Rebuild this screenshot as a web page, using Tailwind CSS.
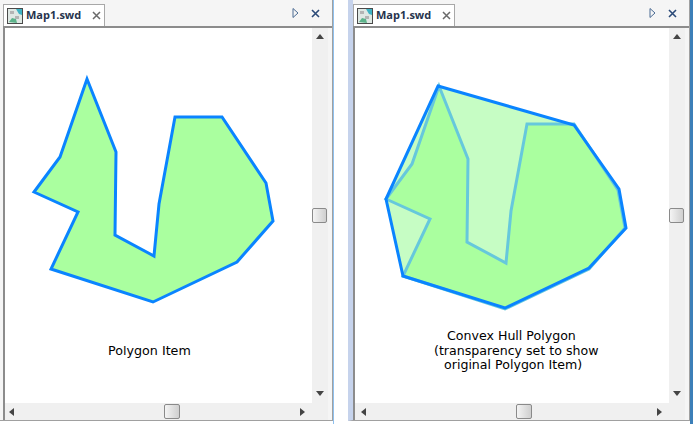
<!doctype html>
<html>
<head>
  <meta charset="UTF-8" />
  <title>Map1.swd</title>
  <script src="https://cdn.jsdelivr.net/npm/@tailwindcss/browser@4"></script>
</head>
<body class="bg-white">
<div class="flex h-[424px] w-[693px] overflow-hidden bg-white font-['DejaVu_Sans',sans-serif] text-black">
  <!-- Left window -->
  <div class="flex h-[421px] w-[333px] flex-none flex-col border-r border-b border-[#a0a0a0] bg-[#f5f5f5] pl-[3px]">
    <div class="flex h-[28px] flex-none items-end border-b-2 border-[#8c8c8c]">
      <div class="flex h-[22px] w-[102px] items-center border border-b-0 border-[#a8a8a8] bg-white pl-[3px]">
        <svg width="16" height="16" viewBox="0 0 16 16"><rect x="0.5" y="0.5" width="15" height="15" fill="#dfe8e4" stroke="#4a4a4a"/><path d="M9 1h6v6l-3-1z" fill="#3fb2c4"/><path d="M2 14l3-4 4 1 1 4z" fill="#5cb38a"/><path d="M3 3h4v3H3zM8 8h4v3H8z" fill="#b4b4b4"/></svg>
        <span class="ml-[3px] font-['Open_Sans',sans-serif] text-[11px] font-bold text-[#26334d]">Map1.swd</span>
        <svg class="ml-[11px]" width="9" height="9" viewBox="0 0 9 9"><path d="M1 1l7 7M8 1l-7 7" stroke="#6a6a6a" stroke-width="1.5"/></svg>
      </div>
      <div class="flex h-[26px] flex-1 items-center justify-end gap-[12px] pr-[12px]">
        <svg width="7" height="10" viewBox="0 0 7 10"><path d="M1 .5v9L6 5z" fill="none" stroke="#4b6a92"/></svg>
        <svg width="9" height="9" viewBox="0 0 9 9"><path d="M1 1l7 7M8 1l-7 7" stroke="#2b4a78" stroke-width="1.6"/></svg>
      </div>
    </div>
    <div class="flex min-h-0 flex-1 border-l-2 border-[#8c8c8c] pr-[4px]">
      <div class="flex min-w-0 flex-1 flex-col">
        <div class="relative h-[375px] w-[307px] flex-none bg-white">
          <svg class="absolute inset-0" width="307" height="375" viewBox="5 28 307 375">
            <polygon points="87,79 116,152 115,235 154,256 159,204 175,117 222,117 266,183 273,221 237,262 153,302 51,269 78,212 34,192 60,157" fill="#aaff9f" stroke="#0a84ff" stroke-width="3" stroke-linejoin="miter"/>
          </svg>
          <span class="absolute left-[103px] top-[315px] text-[12.7px] leading-[15px]">Polygon Item</span>
        </div>
        <div class="flex h-[17px] flex-none items-center justify-between bg-[#f0f0f0] pl-[4px] pr-[7px]">
          <svg width="5" height="8" viewBox="0 0 5 8"><path d="M5 0v8L0 4z" fill="#444"/></svg>
          <div class="ml-[30px] h-[15px] w-[16px] rounded-[2px] border border-[#8a8a8a] bg-gradient-to-r from-[#f4f4f4] to-[#cfcfcf]"></div>
          <svg width="5" height="8" viewBox="0 0 5 8"><path d="M0 0v8l5-4z" fill="#444"/></svg>
        </div>
      </div>
      <div class="flex w-[16px] flex-none flex-col items-center justify-between bg-[#f0f0f0] pb-[24px] pt-[6px]">
        <svg width="8" height="5" viewBox="0 0 8 5"><path d="M0 5h8L4 0z" fill="#444"/></svg>
        <div class="h-[15px] w-[15px] self-start rounded-[2px] border border-[#8a8a8a] bg-gradient-to-r from-[#f4f4f4] to-[#cfcfcf]"></div>
        <svg width="8" height="5" viewBox="0 0 8 5"><path d="M0 0h8L4 5z" fill="#444"/></svg>
      </div>
    </div>
  </div>
  <div class="h-[424px] w-[1px] flex-none bg-[#8fc0ee]"></div>
  <div class="w-[14px] flex-none"></div>
  <!-- Right window -->
  <div class="flex h-[421px] w-[342px] flex-none flex-col border-r border-b border-[#a0a0a0] border-l-[5px] border-l-[#c6d3ec] bg-[#f5f5f5]">
    <div class="flex h-[28px] flex-none items-end border-b-2 border-[#8c8c8c]">
      <div class="flex h-[22px] w-[102px] items-center border border-b-0 border-[#a8a8a8] bg-white pl-[3px]">
        <svg width="16" height="16" viewBox="0 0 16 16"><rect x="0.5" y="0.5" width="15" height="15" fill="#dfe8e4" stroke="#4a4a4a"/><path d="M9 1h6v6l-3-1z" fill="#3fb2c4"/><path d="M2 14l3-4 4 1 1 4z" fill="#5cb38a"/><path d="M3 3h4v3H3zM8 8h4v3H8z" fill="#b4b4b4"/></svg>
        <span class="ml-[3px] font-['Open_Sans',sans-serif] text-[11px] font-bold text-[#26334d]">Map1.swd</span>
        <svg class="ml-[11px]" width="9" height="9" viewBox="0 0 9 9"><path d="M1 1l7 7M8 1l-7 7" stroke="#6a6a6a" stroke-width="1.5"/></svg>
      </div>
      <div class="flex h-[26px] flex-1 items-center justify-end gap-[12px] pr-[12px]">
        <svg width="7" height="10" viewBox="0 0 7 10"><path d="M1 .5v9L6 5z" fill="none" stroke="#4b6a92"/></svg>
        <svg width="9" height="9" viewBox="0 0 9 9"><path d="M1 1l7 7M8 1l-7 7" stroke="#2b4a78" stroke-width="1.6"/></svg>
      </div>
    </div>
    <div class="flex min-h-0 flex-1 border-l-2 border-[#8c8c8c] pr-[4px]">
      <div class="flex min-w-0 flex-1 flex-col">
        <div class="relative h-[375px] w-[314px] flex-none bg-white">
          <svg class="absolute inset-0" width="314" height="375" viewBox="355 28 314 375">
            <polygon points="438,86 574,125 619,189 626,228 589,268 505,308 403,276 386,199" fill="#c6fdc4"/>
            <polygon points="439,86 468,159 467,242 506,263 511,211 527,124 574,124 618,190 625,228 589,269 505,309 403,276 430,219 386,199 412,164" fill="#aaff9f" stroke="#66c8dc" stroke-width="3"/>
            <polygon points="438,86 574,125 619,189 626,228 589,268 505,308 403,276 386,199" fill="none" stroke="#0a84ff" stroke-width="3"/>
          </svg>
          <div class="absolute left-[79px] top-[301px] text-[12.6px] leading-[14.5px]">
            <p class="pl-[13px]">Convex Hull Polygon</p>
            <p>(transparency set to show</p>
            <p class="pl-[10px]">original Polygon Item)</p>
          </div>
        </div>
        <div class="flex h-[17px] flex-none items-center justify-between bg-[#f0f0f0] pl-[6px] pr-[7px]">
          <svg width="5" height="8" viewBox="0 0 5 8"><path d="M5 0v8L0 4z" fill="#444"/></svg>
          <div class="ml-[24px] h-[15px] w-[16px] rounded-[2px] border border-[#8a8a8a] bg-gradient-to-r from-[#f4f4f4] to-[#cfcfcf]"></div>
          <svg width="5" height="8" viewBox="0 0 5 8"><path d="M0 0v8l5-4z" fill="#444"/></svg>
        </div>
      </div>
      <div class="flex w-[16px] flex-none flex-col items-center justify-between bg-[#f0f0f0] pb-[24px] pt-[6px]">
        <svg width="8" height="5" viewBox="0 0 8 5"><path d="M0 5h8L4 0z" fill="#444"/></svg>
        <div class="h-[15px] w-[15px] self-start rounded-[2px] border border-[#8a8a8a] bg-gradient-to-r from-[#f4f4f4] to-[#cfcfcf]"></div>
        <svg width="8" height="5" viewBox="0 0 8 5"><path d="M0 0h8L4 5z" fill="#444"/></svg>
      </div>
    </div>
  </div>
  <div class="h-[424px] flex-1 bg-[#3c7fb8]"></div>
</div>
</body>
</html>
